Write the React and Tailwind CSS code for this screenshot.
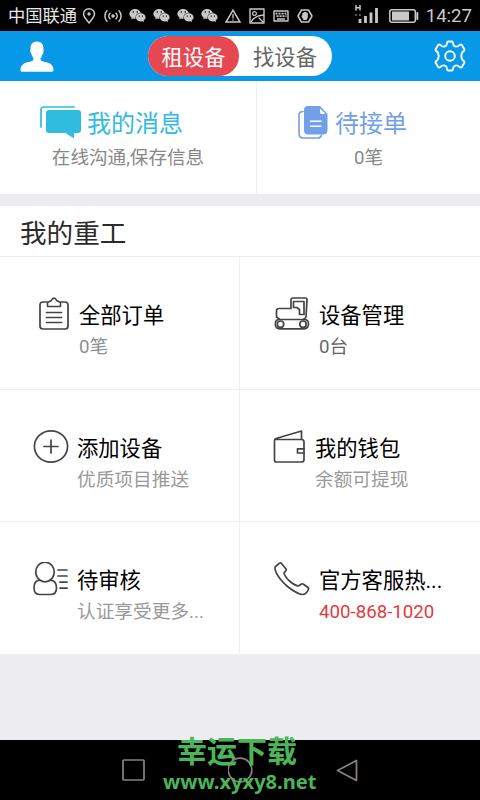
import React from 'react';
import { FaWeixin } from 'react-icons/fa';

const Svg = ({ w, h, className, children }) => (
    <svg width={w} height={h} viewBox={`0 0 ${w} ${h}`} fill="none" stroke="currentColor" strokeWidth="1.7" strokeLinecap="round" strokeLinejoin="round" className={className}>
        {children}
    </svg>
);

// Notification icons of the status bar
const PinIcon = () => (
    <Svg w={14} h={16}>
        <path d="M7 15C4 11.200 1.500 8.600 1.500 6a5.500 5.200 0 0 1 11 0c0 2.600-2.500 5.200-5.500 9Z" strokeWidth="1.500" />
        <circle cx="7" cy="6" r="1.700" fill="currentColor" stroke="none" />
    </Svg>
);

const RadioIcon = () => (
    <Svg w={18} h={14}>
        <circle cx="9" cy="7" r="1.800" fill="currentColor" stroke="none" />
        <path d="M6 4.200a4 4 0 0 0 0 5.600M12 4.200a4 4 0 0 1 0 5.600M3 1.800a7.500 7.500 0 0 0 0 10.400M15 1.800a7.500 7.500 0 0 1 0 10.400" strokeWidth="1.500" />
    </Svg>
);

const WarnIcon = () => (
    <Svg w={16} h={14}>
        <path d="M8 1.200 15 13H1Z" strokeWidth="1.500" strokeLinejoin="miter" />
        <path d="M8 5.500v3.500M8 11v.2" strokeWidth="1.300" />
    </Svg>
);

const PhotoIcon = () => (
    <Svg w={16} h={16}>
        <rect x="1" y="1" width="14" height="14" strokeWidth="1.400" />
        <circle cx="5.500" cy="5.500" r="1.900" strokeWidth="1.200" />
        <path d="M2 14c2.500-5 6-6.500 12.500-7M10 10l4 4" strokeWidth="1.300" />
    </Svg>
);

const KeyboardIcon = () => (
    <Svg w={16} h={12}>
        <rect x="1" y="1" width="14" height="10" strokeWidth="1.400" />
        <path d="M2.500 3.700h11M3.500 6.200h10" strokeWidth="1.700" strokeDasharray="2 1" strokeLinecap="butt" />
        <path d="M4 9h8" strokeWidth="1.500" strokeLinecap="butt" />
    </Svg>
);

const HandIcon = () => (
    <Svg w={16} h={14}>
        <path d="M4.500 1h7L15 7l-3.500 6h-7L1 7Z" strokeWidth="1.500" />
        <path d="M4.300 7 5.300 6.200V4H6.500V3H9.500V3.800H10.800V8.500L9.500 11h-3Z" fill="currentColor" stroke="none" />
    </Svg>
);

const SignalIcon = () => (
    <Svg w={26} h={20}>
        <path d="M2 1v5.500M6 1v5.500M2 3.800h4" strokeWidth="1.500" strokeLinecap="butt" />
        <path d="M1 11h2M5 11h2" stroke="#555" strokeWidth="2" strokeLinecap="butt" />
        <path d="M6 19v-4M11.500 19v-7M17 19V8.500M22.500 19V4" strokeWidth="2.800" strokeLinecap="butt" />
    </Svg>
);

const BatteryIcon = () => (
    <Svg w={30} h={14}>
        <rect x=".8" y=".8" width="25.500" height="12.400" rx="2" strokeWidth="1.500" />
        <rect x="3" y="2.500" width="17" height="9" fill="currentColor" stroke="none" />
        <path d="M28.300 4v6" strokeWidth="2" />
    </Svg>
);

// Header icons
const UserIcon = () => (
    <Svg w={34} h={31}>
        <path d="M17 .5C21.500.5 23.500 3.500 23.500 7.500C23.500 9 23.800 9.500 23.500 11C23.200 12.500 22.500 13 22 14.500C21.500 16.300 20.500 17 20.500 18.200C20.500 20 23 20.300 26.500 21.200C31 22.400 33.500 24.500 33.500 29C33.500 30.300 33 30.700 32 30.700H2C1 30.700.5 30.300.5 29C.5 24.500 3 22.400 7.500 21.200C11 20.300 13.500 20 13.500 18.200C13.500 17 12.500 16.300 12 14.500C11.500 13 10.800 12.500 10.500 11C10.200 9.500 10.500 9 10.500 7.500C10.500 3.500 12.500.5 17 .5Z" fill="currentColor" stroke="none" />
    </Svg>
);

const GearIcon = () => (
    <Svg w={34} h={32}>
        <path d="M13.700 4.500Q14 1.500 15 1.500H19Q20 1.500 20.300 4.500Q20.800 6.300 23 6.600Q25 6.800 26.500 5Q28 4 29 5.200L31.200 8.900Q32 10 30.700 11.200Q28.500 12.300 28.300 16Q28.500 19.700 30.700 20.800Q32 22 31.200 23.100L29 26.800Q28 28 26.500 27Q25 25.200 23 25.400Q20.800 25.700 20.300 27.500Q20 30.500 19 30.500H15Q14 30.500 13.700 27.500Q13.200 25.700 11 25.400Q9 25.200 7.500 27Q6 28 5 26.800L2.800 23.100Q2 22 3.300 20.800Q5.500 19.700 5.700 16Q5.500 12.300 3.300 11.200Q2 10 2.800 8.900L5 5.200Q6 4 7.500 5Q9 6.800 11 6.600Q13.200 6.300 13.700 4.500Z" strokeWidth="1.900" />
        <circle cx="17" cy="16" r="4.800" strokeWidth="1.900" />
    </Svg>
);

// Shortcut icons
const ChatIcon = () => (
    <Svg w={41} h={33}>
        <path d="M34 1H4Q1 1 1 4V21" strokeWidth="1.700" />
        <path d="M9 4H38Q41 4 41 7V24Q41 27 38 27H34V32.500L25.500 27H9Q6 27 6 24V7Q6 4 9 4Z" fill="currentColor" stroke="none" />
    </Svg>
);

const PapersIcon = () => (
    <Svg w={30} h={33}>
        <path d="M5 5.500Q1 5.500 1 9V27.500Q1 32 5.500 32H19Q23 32 23.500 29" strokeWidth="1.600" />
        <path d="M10 0H22L29.500 8V24Q29.500 28.500 25.500 28.500H10Q6 28.500 6 24V4Q6 0 10 0Z" fill="currentColor" stroke="none" />
        <path d="M22 2.500V6Q22 8 24 8H27.500Z" fill="#fff" stroke="none" />
        <path d="M12.500 15.300H23M12.500 20.300H23" stroke="#fff" strokeWidth="1.600" />
    </Svg>
);

// Menu icons
const OrdersIcon = () => (
    <Svg w={30} h={33}>
        <path d="M8 5H4Q1 5 1 8V29Q1 32 4 32H26Q29 32 29 29V8Q29 5 26 5H22" />
        <path d="M8.500 9.500V5.500L12 3.800Q15 -1.500 18 3.800L21.500 5.500V9.500Z" strokeWidth="1.600" />
        <path d="M7.500 15.500H22.500M7.500 20.500H22.500M7.500 25.500H22.500" />
    </Svg>
);

const DiggerIcon = () => (
    <Svg w={36} h={33}>
        <path d="M6 22.500H30Q34.500 22.500 34.500 27T30 31.800H6Q1.300 31.800 1.300 27T6 22.500Z" />
        <circle cx="6.500" cy="27.200" r="3.200" />
        <circle cx="29" cy="27.200" r="3.200" />
        <path d="M5 21.800 2.500 20V13.500Q2.500 11.500 5 11.500H17V3Q17 1 19 1H31.500Q33 1 33 3L32 20Q31.800 21.500 30 21.500" />
        <path d="M19.500 10.500V4.500H30V17.500H25.500V12.500L23 10.500Z" />
    </Svg>
);

const AddIcon = () => (
    <Svg w={36} h={34}>
        <ellipse cx="18" cy="16.500" rx="16.600" ry="15.600" />
        <path d="M18 10V23M11 16.500H25" />
    </Svg>
);

const WalletIcon = () => (
    <Svg w={33} h={33}>
        <path d="M3 9.500H28.500Q31 9.500 31 12V29.500Q31 32 28.500 32H3Q1.500 32 1.500 30V10.500Q1.500 9 3 8.500L28.500 1V9" />
        <path d="M31 18.800H24.500V23H31" />
    </Svg>
);

const ReviewIcon = () => (
    <Svg w={36} h={34}>
        <path d="M7 18.200A9.200 9.800 0 1 1 17 18.200Q23.500 18.500 23.500 26Q23.500 32.500 17.500 32.500H7Q1 32.500 1 26Q1 18.500 7 18.200" />
        <path d="M7 18.200Q12 21.500 17 18.200" />
        <path d="M25 8H34M25 14H34M27 20.200H34M27 26.200H34" />
    </Svg>
);

const PhoneIcon = () => (
    <Svg w={36} h={34}>
        <path d="M1.500 4.500 5.500 1.200Q6.500.6 7.500 1.500L12 7Q12.600 8 11.700 9L10 10.800Q10.500 14 15 18.500Q20.500 23.500 24.500 24L27.500 22Q28.500 21.500 29.500 22.200L34 25.500Q35 26.300 34.400 27.300Q32.500 32.500 28.500 32.500Q23 32 13.500 24.500Q4 16 1.500 9Q.5 6 1.500 4.500Z" />
    </Svg>
);

const shortcuts = [
    { title: '我的消息', note: '在线沟通,保存信息', icon: ChatIcon, box: 'w-[257px] border-r border-[#f0f0f0]', color: 'text-[#2fbcdf]', gap: 'gap-[6px] pl-[40px]' },
    { title: '待接单', note: '0笔', icon: PapersIcon, box: 'flex-1', color: 'text-[#739fe9]', gap: 'gap-[7px] pl-[41px]' },
];

const menu = [
    { title: '全部订单', note: '0笔', icon: OrdersIcon, pad: 'pl-[39px] gap-[10px]', noteColor: 'text-[#8f8f8f]' },
    { title: '设备管理', note: '0台', icon: DiggerIcon, pad: 'pl-[34px] gap-[9px]', noteColor: 'text-[#666]' },
    { title: '添加设备', note: '优质项目推送', icon: AddIcon, pad: 'pl-[33px] gap-[8px]', noteColor: 'text-[#999]' },
    { title: '我的钱包', note: '余额可提现', icon: WalletIcon, pad: 'pl-[33px] gap-[9px]', noteColor: 'text-[#999]' },
    { title: '待审核', note: '认证享受更多...', icon: ReviewIcon, pad: 'pl-[33px] gap-[8px]', noteColor: 'text-[#999]' },
    { title: '官方客服热...', note: '400-868-1020', icon: PhoneIcon, pad: 'pl-[34px] gap-[9px]', noteColor: 'text-[#df3c40]' },
];

const StatusBar = () => (
    <div className="h-[31px] bg-black text-[#c8c8c8] flex items-center pl-[8px] pr-[8px]">
        <span className="w-[69px] pt-[2px] text-[17.3px] leading-[31px] whitespace-nowrap text-[#e8e8e8]">中国联通</span>
        {[PinIcon, RadioIcon, FaWeixin, FaWeixin, FaWeixin, FaWeixin, WarnIcon, PhotoIcon, KeyboardIcon, HandIcon].map((Icon, i) => (
            <span key={i} className="w-6 flex justify-center"><Icon size={17} /></span>
        ))}
        <div className="ml-[37px] w-[35px] -mt-[3px]"><SignalIcon /></div>
        <BatteryIcon />
        <span className="ml-auto pt-[2px] text-[18.6px] leading-[31px]">14:27</span>
    </div>
);

const App = () => {
    return (
        <div className="w-[480px] h-[800px] flex flex-col overflow-hidden bg-[#ededf1] font-[Roboto,'Noto_Sans_CJK_SC',sans-serif]">
            <StatusBar />

            {/* Header */}
            <header className="h-[50px] bg-[#0799e8] text-white flex items-center pl-[20px] pr-[13px]">
                <UserIcon />
                <div className="flex w-[184px] h-10 ml-[94px] mr-auto rounded-full bg-white text-[21.3px] leading-[43px]">
                    <button className="w-[91px] rounded-full bg-[#e54850] text-white">租设备</button>
                    <button className="flex-1 pr-[1px] text-[#666]">找设备</button>
                </div>
                <GearIcon />
            </header>

            {/* Shortcuts */}
            <section className="flex h-[113px] bg-white">
                {shortcuts.map(({ title, note, icon: Icon, box, color, gap }) => (
                    <div key={title} className={box}>
                        <div className={`flex h-[33px] mt-[25px] ${gap} ${color}`}>
                            <Icon />
                            <span className="text-[24px] leading-[37px]">{title}</span>
                        </div>
                        <p className="mt-[5px] text-center text-[18.6px] leading-[29px] text-[#888]">{note}</p>
                    </div>
                ))}
            </section>

            {/* Menu */}
            <section className="mt-3 bg-white">
                <h2 className="h-[51px] pl-[20px] border-b border-[#ececec] text-[26.6px] leading-[55px] text-[#2b2b2b]">我的重工</h2>
                <div className="grid grid-cols-2">
                    {menu.map(({ title, note, icon: Icon, pad, noteColor }) => (
                        <div key={title} className={`flex items-start h-[132.500px] pt-[40px] border-b border-[#f0f0f0] odd:border-r text-[#444] ${pad}`}>
                            <Icon />
                            <div className="whitespace-nowrap">
                                <h3 className="text-[21.3px] leading-[37px] text-black">{title}</h3>
                                <p className={`text-[18.7px] leading-[27px] ${noteColor}`}>{note}</p>
                            </div>
                        </div>
                    ))}
                </div>
            </section>

            {/* Navigation keys */}
            <nav className="relative mt-auto h-[60px] bg-black text-[#8c8088] flex items-center justify-between pl-[122px] pr-[122px]">
                <Svg w={23} h={22}><rect x="1" y="1" width="21" height="20" rx="1" /></Svg>
                <Svg w={26} h={26}><circle cx="12" cy="13" r="11.800" /></Svg>
                <Svg w={22} h={23}><path d="M20.500 1.500V21.500L1.500 11.500Z" /></Svg>
                <div className="absolute -top-[7px] left-0 w-full pl-[163px] font-['Noto_Sans','Noto_Sans_CJK_SC',sans-serif] font-bold text-[#4cb558] whitespace-nowrap">
                    <p className="pl-[14px] text-[30px] leading-[36px]">幸运下载</p>
                    <p className="text-[20.100px] leading-[26px]">www.xyxy8.net</p>
                </div>
            </nav>
        </div>
    );
};

export default App;
